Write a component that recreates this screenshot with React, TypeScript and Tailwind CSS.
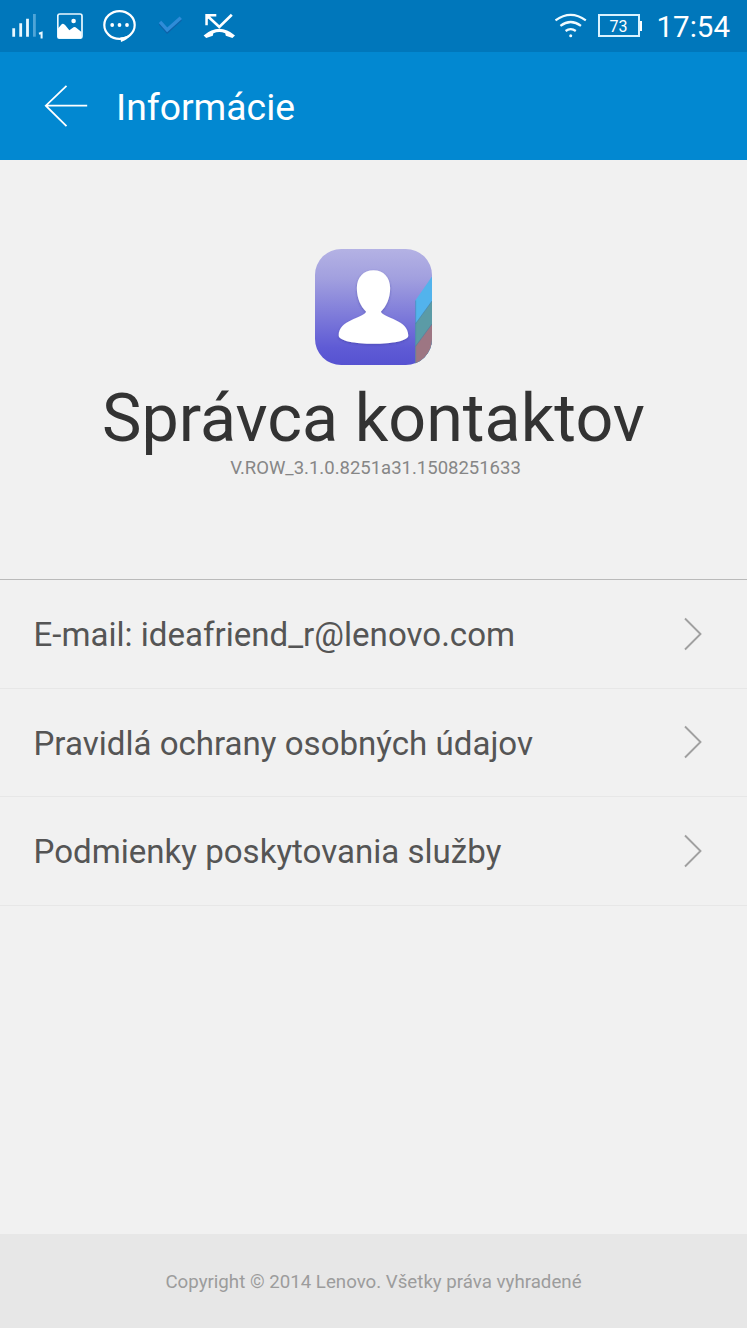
import React from 'react';

interface InfoItem {
  label: string;
}

const items: InfoItem[] = [
  { label: 'E-mail: ideafriend_r@lenovo.com' },
  { label: 'Pravidlá ochrany osobných údajov' },
  { label: 'Podmienky poskytovania služby' },
];

const SignalIcon: React.FC = () => (
  <svg width="32" height="28" viewBox="12 12 32 28" fill="none" stroke="#e9f8ff" strokeWidth="2.8">
    <path d="M13.7 28.3V36.7M20.7 23.3V36.7M27.5 18.7V36.7" />
    <path d="M34.4 14V36.7" stroke="#4fa5d8" />
    <path d="M39 33.8L41.6 32.8V38.6" strokeWidth="2" />
  </svg>
);

const PictureIcon: React.FC = () => (
  <svg width="26" height="26" viewBox="57 13 26 26" fill="none">
    <rect x="57.8" y="14" width="24.2" height="24.2" rx="2" stroke="#e9f8ff" strokeWidth="1.7" />
    <circle cx="73.6" cy="21" r="2.3" fill="white" />
    <path d="M58 28.5L61 25Q63 22.3 65.3 25.3L69.3 30.2L72.5 28Q74.5 26.2 76.5 28L81.5 32V38H58Z" fill="white" />
  </svg>
);

const MessageIcon: React.FC = () => (
  <svg width="34" height="34" viewBox="103 9 34 34" fill="none">
    <ellipse cx="119.5" cy="25" rx="15.2" ry="13.9" stroke="white" strokeWidth="2.2" />
    <path d="M120.3 37.4Q128 37 131.5 33Q128.5 39.6 121 42Z" fill="white" />
    <circle cx="112.2" cy="25" r="1.9" fill="white" />
    <circle cx="119.5" cy="25" r="1.9" fill="white" />
    <circle cx="127" cy="25" r="1.9" fill="white" />
  </svg>
);

const CheckIcon: React.FC = () => (
  <svg width="24" height="20" viewBox="158 16 24 20" fill="none" strokeWidth="3.4">
    <path d="M160 23.4L167.2 31.6L180.8 19.2" stroke="#0d62a8" />
    <path d="M160 21.8L167.2 29.8L180.8 17.8" stroke="#2f8cd8" />
  </svg>
);

const MissedCallIcon: React.FC = () => (
  <svg width="32" height="26" viewBox="203 13 32 26" fill="none">
    <path d="M207 15.5L219.3 27L231.8 14.8" stroke="white" strokeWidth="2.7" />
    <path d="M205.3 14H216.3V16.5H210.6L207.8 19.2V25.3H205.3Z" fill="white" />
    <path d="M203.6 35.4Q219.3 22.2 235 35.4L232.4 38L225.8 35.8L225.2 33.2Q219.3 30.8 213.4 33.2L212.8 35.8L206.2 38Z" fill="white" />
  </svg>
);

const WifiIcon: React.FC = () => (
  <svg width="34" height="26" viewBox="554 12 34 26" fill="none" stroke="#f0fbff" strokeWidth="2.2">
    <path d="M555.5 20.4Q570.7 9.2 585.8 20.4" />
    <path d="M560.4 25.8Q570.7 18.2 581 25.8" />
    <path d="M565.6 31Q570.7 27.2 575.8 31" />
    <circle cx="570.7" cy="35.7" r="1.5" fill="#f0fbff" stroke="none" />
  </svg>
);

const ContactIcon: React.FC = () => (
  <svg width="117" height="116" viewBox="0 0 116 116" preserveAspectRatio="none">
    <defs>
      <linearGradient id="tile" x1="0" y1="0" x2="0" y2="1">
        <stop offset="0" stopColor="#b4b2e4" />
        <stop offset="0.25" stopColor="#a2a0df" />
        <stop offset="0.85" stopColor="#5f5bd5" />
        <stop offset="1" stopColor="#5652d1" />
      </linearGradient>
      <clipPath id="tileClip">
        <rect width="116" height="116" rx="26" />
      </clipPath>
      <filter id="personShadow" x="-10%" y="-10%" width="120%" height="120%">
        <feDropShadow dx="0" dy="1" stdDeviation="0.8" floodColor="#38369a" floodOpacity="0.5" />
      </filter>
    </defs>
    <g clipPath="url(#tileClip)">
      <rect width="116" height="116" fill="url(#tile)" />
      <path d="M99.5 51.5L116 27.5V116H99.5Z" fill="#52b3ec" />
      <path d="M99.5 75L116 52V116H99.5Z" fill="#5b9ba6" />
      <path d="M99.5 97.5L116 75V116H99.5Z" fill="#9d7683" />
      <path d="M99.8 51.5V116M99.5 75L116 52M99.5 97.5L116 75" stroke="#477aa4" strokeWidth="0.8" fill="none" opacity="0.6" />
    </g>
    <path
      d="M58 21.2C68 21.2 74.5 28.5 74.5 39C74.5 49 70.8 57.5 65.3 62.7C68.5 69.5 92.5 70.5 92.5 86.5C92.5 92 76 94.8 58 94.8C40 94.8 23.5 92 23.5 86.5C23.5 70.5 47.5 69.5 50.7 62.7C45.2 57.5 41.5 49 41.5 39C41.5 28.5 48 21.2 58 21.2Z"
      fill="white"
      filter="url(#personShadow)"
    />
  </svg>
);

const StatusBar: React.FC = () => (
  <div className="flex h-[52px] items-start bg-[#0077bb] text-white">
    <div className="flex flex-1 items-start pl-3">
      <div className="pt-3"><SignalIcon /></div>
      <div className="ml-[13px] pt-[13px]"><PictureIcon /></div>
      <div className="ml-5 pt-[9px]"><MessageIcon /></div>
      <div className="ml-[21px] pt-4"><CheckIcon /></div>
      <div className="ml-[21px] pt-[13px]"><MissedCallIcon /></div>
    </div>
    <div className="flex items-start pr-[17px]">
      <div className="pt-3"><WifiIcon /></div>
      <div className="mt-3.5 ml-2.5 flex items-center">
        <div className="flex h-[23px] w-[42px] items-center justify-center border-2 border-[#d9f2ff] pt-0.5 text-base leading-none">
          73
        </div>
        <div className="h-2.5 w-0.5 bg-white"></div>
      </div>
      <div className="ml-[15px] pt-2.5 text-[29.5px] leading-[34px]">17:54</div>
    </div>
  </div>
);

const App: React.FC = () => {
  return (
    <div className="flex h-[1328px] w-[747px] flex-col overflow-hidden bg-[#f1f1f1] font-['Roboto',sans-serif]">
      <StatusBar />

      {/* Title bar */}
      <header className="flex h-[108px] items-center bg-[#0288d1] pl-11 text-white">
        <svg className="mb-px" width="44" height="42" viewBox="0 0 44 42" fill="none" stroke="white" strokeWidth="1.8">
          <path d="M22.5 .8L1.8 20.7L22.5 41.2M1.8 20.7H43.2" />
        </svg>
        <h1 className="ml-7 pt-0.5 text-[37.3px] leading-[44px]">Informácie</h1>
      </header>

      {/* App identity */}
      <section className="flex h-[419px] flex-col items-center pt-[89px]">
        <ContactIcon />
        <h2 className="mt-3.5 text-[66.4px] leading-[78px] whitespace-nowrap text-[#333333]">Správca kontaktov</h2>
        <p className="ml-1 text-[18.5px] leading-[22px] text-[#868686]">V.ROW_3.1.0.8251a31.1508251633</p>
      </section>

      <ul className="border-t border-[#bababa]">
        {items.map((item) => (
          <li
            key={item.label}
            className="flex h-[108.6px] items-center justify-between border-b border-[#e7e7e7] pr-11 pl-[33.5px] text-[33.1px] leading-10 text-[#555555]"
          >
            <span className="pt-[3px]">{item.label}</span>
            <svg width="20" height="34" viewBox="0 0 20 34" fill="none" stroke="#a0a0a0" strokeWidth="1.9">
              <path d="M2 1.5L17.5 17L2 32.5" />
            </svg>
          </li>
        ))}
      </ul>

      <footer className="mt-auto flex h-[94px] items-center justify-center bg-[#e7e7e7] pt-[3px] text-[18.7px] text-[#9c9c9c]">
        Copyright © 2014 Lenovo. Všetky práva vyhradené
      </footer>
    </div>
  );
};

export default App;
